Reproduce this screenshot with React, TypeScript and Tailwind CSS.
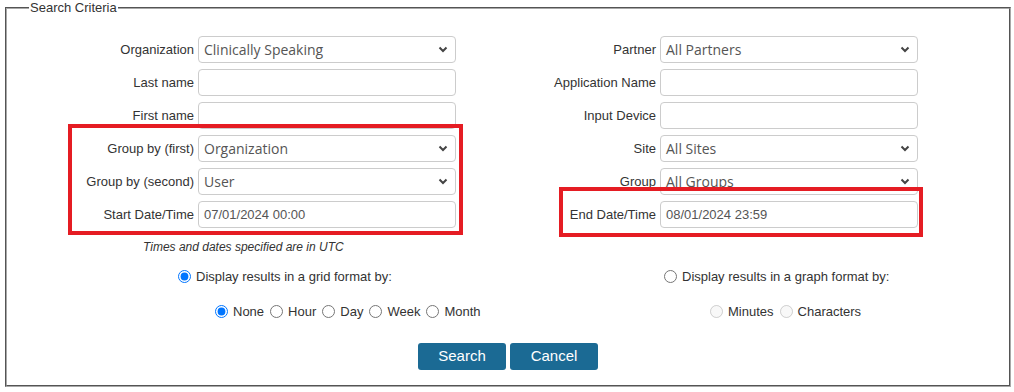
import React from "react";

const labelCls = "text-[13px] text-[#333] text-right leading-none whitespace-nowrap";
const boxCls =
  "h-[27px] w-[258px] rounded-[4px] border border-[#ccc] bg-white px-[5px] text-[13px] text-[#555] flex items-center";

function Chevron() {
  return (
    <svg width="10" height="7" viewBox="0 0 10 7" className="ml-auto mr-[2px]">
      <path d="M1.5 1.5 L5 5 L8.5 1.5" fill="none" stroke="#444" strokeWidth="2" />
    </svg>
  );
}

function SelectBox({ value }: { value: string }) {
  return (
    <div className={boxCls}>
      <span className="font-['Open_Sans',sans-serif] text-[14px]">{value}</span>
      <Chevron />
    </div>
  );
}

function TextBox({ value }: { value?: string }) {
  return <div className={boxCls}>{value ? <span>{value}</span> : null}</div>;
}

function Row({
  label,
  labelW,
  children,
}: {
  label: string;
  labelW: string;
  children: React.ReactNode;
}) {
  return (
    <div className="flex items-center gap-[4px]">
      <div className={`${labelCls} ${labelW}`}>{label}</div>
      {children}
    </div>
  );
}

function Radio({
  checked,
  disabled,
  label,
}: {
  checked?: boolean;
  disabled?: boolean;
  label: string;
}) {
  return (
    <label className="flex items-center gap-[5px]">
      <input
        type="radio"
        defaultChecked={checked}
        disabled={disabled}
        className="m-0 h-[13px] w-[13px]"
        name={label}
      />
      <span>{label}</span>
    </label>
  );
}

export default function App() {
  return (
    <div className="w-[1014px] h-[392px] bg-white font-['Liberation_Sans',Arial,sans-serif] text-[#333] relative">
      <fieldset className="ml-[5px] mr-[3px] h-[387px] border-2 [border-style:groove] border-[#a8a8a8]">
        <legend className="ml-[22px] px-[1px] text-[13px] leading-[15px] text-[#333]">
          Search Criteria
        </legend>
        <div className="flex pl-[67px] pt-[21px]">
          <div className="flex flex-col gap-[6px]">
            <Row label="Organization" labelW="w-[120px]">
              <SelectBox value="Clinically Speaking" />
            </Row>
            <Row label="Last name" labelW="w-[120px]">
              <TextBox />
            </Row>
            <Row label="First name" labelW="w-[120px]">
              <TextBox />
            </Row>
            <Row label="Group by (first)" labelW="w-[120px]">
              <SelectBox value="Organization" />
            </Row>
            <Row label="Group by (second)" labelW="w-[120px]">
              <SelectBox value="User" />
            </Row>
            <Row label="Start Date/Time" labelW="w-[120px]">
              <TextBox value="07/01/2024 00:00" />
            </Row>
          </div>
          <div className="ml-[70px] flex flex-col gap-[6px]">
            <Row label="Partner" labelW="w-[130px]">
              <SelectBox value="All Partners" />
            </Row>
            <Row label="Application Name" labelW="w-[130px]">
              <TextBox />
            </Row>
            <Row label="Input Device" labelW="w-[130px]">
              <TextBox />
            </Row>
            <Row label="Site" labelW="w-[130px]">
              <SelectBox value="All Sites" />
            </Row>
            <Row label="Group" labelW="w-[130px]">
              <SelectBox value="All Groups" />
            </Row>
            <Row label="End Date/Time" labelW="w-[130px]">
              <TextBox value="08/01/2024 23:59" />
            </Row>
          </div>
        </div>
        <div className="pl-[136px] pt-[12px] text-[12px] italic leading-[15px] text-[#333]">
          Times and dates specified are in UTC
        </div>
        <div className="flex text-[13px] text-[#333] pt-[12px]">
          <div className="flex w-[657px] shrink-0 flex-col">
            <div className="pl-[171px]">
              <Radio checked label="Display results in a grid format by:" />
            </div>
            <div className="mt-[15px] flex items-center gap-[6px] pl-[208px]">
              <Radio checked label="None" />
              <Radio label="Hour" />
              <Radio label="Day" />
              <Radio label="Week" />
              <Radio label="Month" />
            </div>
          </div>
          <div className="flex flex-col">
            <div>
              <Radio label="Display results in a graph format by:" />
            </div>
            <div className="mt-[15px] flex items-center gap-[6px] pl-[46px]">
              <Radio disabled label="Minutes" />
              <Radio disabled label="Characters" />
            </div>
          </div>
        </div>
        <div className="flex justify-center gap-[4px] pt-[22px]">
          <button className="h-[27px] w-[88px] rounded-[3px] bg-[#1b6a94] text-[15px] text-white">
            Search
          </button>
          <button className="h-[27px] w-[88px] rounded-[3px] bg-[#1b6a94] text-[15px] text-white">
            Cancel
          </button>
        </div>
      </fieldset>
      <div className="pointer-events-none absolute left-[68px] top-[124px] h-[111px] w-[395px] border-[4px] border-[#e51c23]" />
      <div className="pointer-events-none absolute left-[559px] top-[187px] h-[50px] w-[364px] border-[4px] border-[#e51c23]" />
    </div>
  );
}
